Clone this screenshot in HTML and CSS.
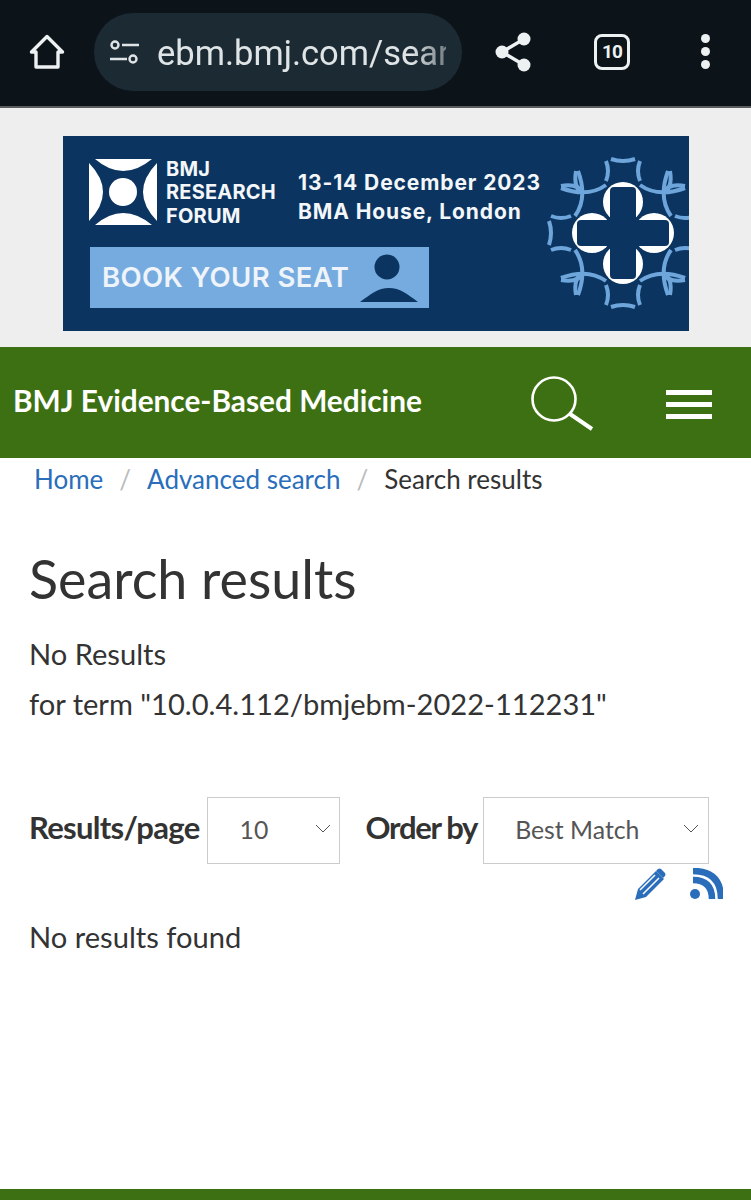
FILE: index.html
```html
<!DOCTYPE html>
<html>
<head>
<meta charset="utf-8">
<title>Search results</title>
<link rel="stylesheet" href="styles.css">
</head>
<body>
<div class="toolbar">
	<svg class="tb-home" width="38" height="38" viewBox="0 0 38 38"><path d="M19 3.500 3.500 19H8v15h22V19h4.500z" fill="none" stroke="#eef1f2" stroke-width="3.400" stroke-linejoin="round"/></svg>
	<div class="urlbar">
		<svg width="32" height="28" viewBox="0 0 32 28"><g fill="none" stroke="#dfe4e6" stroke-width="2.400"><circle cx="6" cy="7" r="3.500"/><circle cx="24" cy="21" r="3.500"/><path d="M13 7h17M1 21h17"/></g></svg>
		<span class="url">ebm.bmj.com/sear</span>
	</div>
	<svg class="tb-share" width="40" height="42" viewBox="0 0 40 42"><path d="M30 8 8 21l22 13" fill="none" stroke="#eef1f2" stroke-width="3.400"/><circle cx="30" cy="8" r="6.500" fill="#eef1f2"/><circle cx="8" cy="21" r="6.500" fill="#eef1f2"/><circle cx="30" cy="34" r="6.500" fill="#eef1f2"/></svg>
	<div class="tabs">10</div>
	<div class="dots"><i></i><i></i><i></i></div>
</div>

<div class="ad-wrap">
	<svg class="banner" width="626" height="195" viewBox="0 0 626 195">
		<rect width="626" height="195" fill="#0b3560"/>
		<g fill="#fff">
			<path d="M32 23H89Q60 47 32 23ZM32 89H89Q60 65 32 89ZM26 27V85Q54 56 26 27ZM94 27V85Q66 56 94 27Z"/>
			<circle cx="60" cy="56" r="14"/>
		</g>
		<g class="bn-small">
			<text x="103" y="40">BMJ</text>
			<text x="103" y="63">RESEARCH</text>
			<text x="103" y="87">FORUM</text>
		</g>
		<g class="bn-date">
			<text x="235" y="54">13-14 December 2023</text>
			<text x="235" y="83">BMA House, London</text>
		</g>
		<rect x="27" y="111" width="339" height="61" fill="#76abdf"/>
		<text class="bn-book" x="39" y="151">BOOK YOUR SEAT</text>
		<circle cx="324" cy="131" r="12.500" fill="#0b3560"/>
		<path d="M297 166C308 158 315 152 326 152S344 158 355 166Z" fill="#0b3560"/>
		<g fill="none" stroke="#6ea6dc" stroke-width="4">
			<g id="lattice">
				<path d="M-12-74Q0-70 12-74M-17-72Q-13-62-17-52M17-72Q13-62 17-52M-62-45Q-35-35-17-48M62-45Q35-35 17-48M-47-62Q-50-45-40-40M47-62Q50-45 40-40" transform="translate(560 97)"/>
			</g>
			<use href="#lattice" transform="rotate(90 560 97)"/>
			<use href="#lattice" transform="rotate(180 560 97)"/>
			<use href="#lattice" transform="rotate(270 560 97)"/>
		</g>
		<g transform="translate(560 97)">
			<g fill="#fff">
				<circle cx="0" cy="-31" r="20"/>
				<circle cx="0" cy="31" r="20"/>
				<circle cx="-31" cy="0" r="20"/>
				<circle cx="31" cy="0" r="20"/>
			</g>
			<g fill="#0b3560">
				<rect x="-13" y="-46" width="26" height="92" rx="4"/>
				<rect x="-46" y="-13" width="92" height="26" rx="4"/>
			</g>
		</g>
	</svg>
</div>

<header class="site-header">
	<a class="journal">BMJ Evidence-Based Medicine</a>
	<svg class="search-ic" width="64" height="56" viewBox="0 0 64 56"><circle cx="23" cy="23" r="21.500" fill="none" stroke="#fff" stroke-width="2.600"/><path d="M39 38 61 53" stroke="#fff" stroke-width="4"/></svg>
	<div class="burger"><i></i><i></i><i></i></div>
</header>

<nav class="crumbs">
	<a>Home</a><span class="sep">/</span><a>Advanced search</a><span class="sep">/</span><span>Search results</span>
</nav>

<main class="content">
	<h1>Search results</h1>
	<p class="no-res">No Results</p>
	<p class="term">for term "10.0.4.112/bmjebm-2022-112231"</p>
	<div class="filters">
		<label class="lb-results">Results/page</label>
		<div class="sel sel-num">10<svg width="16" height="10" viewBox="0 0 16 10"><path d="M1 1l7 7 7-7" fill="none" stroke="#555" stroke-width="1"/></svg></div>
		<label class="lb-order">Order by</label>
		<div class="sel sel-order">Best Match<svg width="16" height="10" viewBox="0 0 16 10"><path d="M1 1l7 7 7-7" fill="none" stroke="#555" stroke-width="1"/></svg></div>
	</div>
	<div class="tools">
		<svg width="32" height="32" viewBox="0 0 32 32"><path d="M1 32l3-11L22 3l8 8-18 18zM5 25l3 3" fill="#2a6ebb"/><path d="M22 3l2-2q2-1 3 0l4 4q1 1 0 3l-2 2z" fill="#2a6ebb"/><path d="M6 22 21 7M9 26 25 10" stroke="#fff" stroke-width="1.500"/></svg>
		<svg width="34" height="32" viewBox="0 0 34 32"><circle cx="6" cy="26" r="5" fill="#2a6ebb"/><path d="M1 12q19 0 19 19M1 3q28 0 28 28" fill="none" stroke="#2a6ebb" stroke-width="6.500" transform="translate(3 0)"/></svg>
	</div>
	<p class="none">No results found</p>
</main>

<div class="footer-bar"></div>
</body>
</html>
```
FILE: styles.css
```css
*{margin: 0;padding: 0;box-sizing: border-box;}
html,body{height: 100%;}
body{width: 751px;height: 1200px;overflow: hidden;background-color: #fff;color: #333;font-family: Lato,"Liberation Sans",sans-serif;display: flex;flex-direction: column;}

.toolbar{height: 108px;background-color: #0c1319;border-bottom: 2px solid #5a5d5f;display: flex;align-items: center;flex-shrink: 0;padding-bottom: 3px;}
.tb-home{margin-left: 28px;}
.urlbar{width: 368px;height: 78px;margin-left: 28px;border-radius: 39px;background-color: #1c2a33;display: flex;align-items: center;padding-left: 15px;overflow: hidden;}
.url{font: 34.500px Roboto,sans-serif;color: #dfe4e6;margin-left: 16px;padding-top: 2px;width: 289px;overflow: hidden;white-space: nowrap;-webkit-mask-image: linear-gradient(to right,#000 88%,rgba(0,0,0,.45));mask-image: linear-gradient(to right,#000 88%,rgba(0,0,0,.45));}
.tb-share{margin-left: 32px;}
.tabs{width: 36px;height: 36px;margin-left: 60px;border: 3.500px solid #eef1f2;border-radius: 8px;color: #eef1f2;font: bold 19px/29px Roboto,sans-serif;letter-spacing: -1px;text-align: center;}
.dots{margin-left: 71px;display: flex;flex-direction: column;gap: 4px;}
.dots i{display: block;width: 9px;height: 9px;border-radius: 50%;background-color: #eef1f2;}

.ad-wrap{height: 239px;background-color: #eee;padding: 28px 0 0 63px;flex-shrink: 0;}
.banner{display: block;}
.banner text{font-family: Inter,"Liberation Sans",sans-serif;font-weight: 700;fill: #f4f7fa;}
.bn-small text{font-size: 20px;letter-spacing: 0.200px;}
.bn-date text{font-size: 21px;letter-spacing: 0.900px;}
.banner .bn-book{font-size: 27.500px;font-weight: 600;fill: #eef4fa;letter-spacing: 0.400px;}

.site-header{height: 111px;background-color: #3d7012;display: flex;align-items: center;flex-shrink: 0;padding-left: 13px;}
.journal{color: #fff;font-size: 29.800px;font-weight: 700;width: 518px;white-space: nowrap;padding-bottom: 5px;}
.search-ic{margin-top: 3px;}
.burger{margin-left: 71px;margin-top: 3px;display: flex;flex-direction: column;gap: 7px;}
.burger i{display: block;width: 46px;height: 5px;background-color: #fff;}

.crumbs{padding: 4px 0 0 34px;font-size: 26px;line-height: 34px;white-space: nowrap;}
.crumbs a{color: #2a6ebb;}
.crumbs .sep{color: #bbb;margin: 0 16px;}

.content{padding: 0 28px 0 29px;flex: 1;}
h1{font-size: 53.800px;font-weight: 400;line-height: 62px;margin-top: 51px;}
.no-res{font-size: 29.100px;line-height: 36px;margin-top: 27px;}
.term{font-size: 29.100px;line-height: 36px;margin-top: 14px;}
.filters{display: flex;align-items: center;margin-top: 75px;height: 67px;}
.filters label{font-size: 31px;font-weight: 700;padding-bottom: 8px;}
.lb-results{letter-spacing: -0.700px;}
.filters .lb-order{margin-left: 26px;letter-spacing: -1.300px;}
.sel{height: 67px;border: 1px solid #ccc;display: flex;align-items: center;justify-content: space-between;font-size: 24.800px;color: #555;padding-bottom: 3px;}
.sel-num{width: 133px;margin-left: 7px;padding-left: 32px;padding-right: 8px;}
.sel-order{width: 226px;margin-left: 6px;padding-left: 31px;padding-right: 9px;}
.tools{display: flex;justify-content: flex-end;gap: 23px;margin-top: 4px;}
.none{font-size: 29.100px;line-height: 36px;margin-top: 19px;}
.footer-bar{height: 11px;background-color: #3d7012;flex-shrink: 0;}
```
